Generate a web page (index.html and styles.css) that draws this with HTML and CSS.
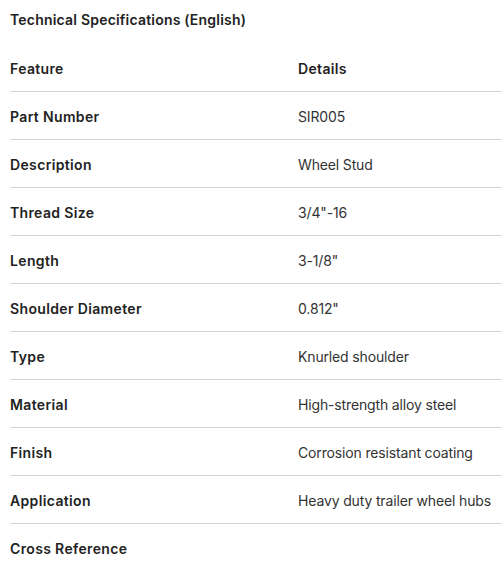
FILE: index.html
```html
<!DOCTYPE html>
<html>
<head>
<meta charset="utf-8">
<link rel="stylesheet" href="styles.css">
</head>
<body>
<div class="wrap">
  <h3 class="title">Technical Specifications (English)</h3>
  <table class="specs">
    <thead>
      <tr><th>Feature</th><th>Details</th></tr>
    </thead>
    <tbody>
      <tr><td class="k">Part Number</td><td>SIR005</td></tr>
      <tr><td class="k">Description</td><td>Wheel Stud</td></tr>
      <tr><td class="k">Thread Size</td><td>3/4"-16</td></tr>
      <tr><td class="k">Length</td><td>3-1/8"</td></tr>
      <tr><td class="k">Shoulder Diameter</td><td>0.812"</td></tr>
      <tr><td class="k">Type</td><td>Knurled shoulder</td></tr>
      <tr><td class="k">Material</td><td>High-strength alloy steel</td></tr>
      <tr><td class="k">Finish</td><td>Corrosion resistant coating</td></tr>
      <tr><td class="k">Application</td><td>Heavy duty trailer wheel hubs</td></tr>
      <tr><td class="k">Cross Reference</td><td></td></tr>
    </tbody>
  </table>
</div>
</body>
</html>
```
FILE: styles.css
```css
html, body {
  margin: 0;
  padding: 0;
  background: #fff;
}
body {
  font-family: Inter, "Noto Sans", sans-serif;
  font-size: 14px;
  color: #333;
  overflow: hidden;
}
.wrap {
  padding: 0 0 0 10px;
}
.title {
  margin: 0;
  padding: 10px 0 0;
  font-size: 14px;
  line-height: 20px;
  font-weight: 600;
  letter-spacing: 0.2px;
  color: #222;
}
.specs {
  width: 100%;
  border-collapse: collapse;
  margin-top: 14px;
}
.specs th, .specs td {
  text-align: left;
  padding: 15px 0 12px;
  line-height: 20px;
  border-bottom: 1px solid #d2d2d2;
}
.specs th, .specs td.k {
  font-weight: 600;
  letter-spacing: 0.35px;
  color: #222;
}
.specs th:first-child, .specs td.k {
  width: 288px;
}
.specs td {
  font-weight: 400;
  letter-spacing: -0.15px;
  color: #333;
}
.specs tbody tr:last-child td {
  border-bottom: none;
}
```
